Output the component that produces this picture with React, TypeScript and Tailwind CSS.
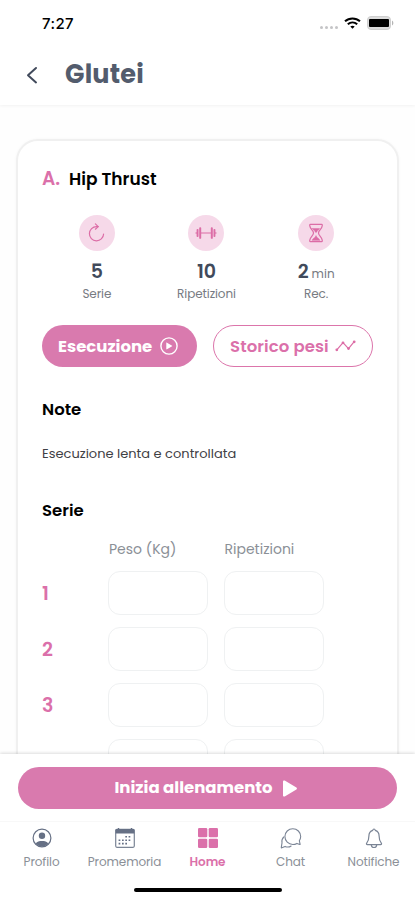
import type { ReactNode } from 'react';

const SETS = [1, 2, 3, 4];

function StatusBar() {
  return (
    <div className="flex h-[46px] items-center justify-between pl-[42px] pr-[21px]">
      <span className="font-['Inter',sans-serif] text-[15px] font-medium leading-none tracking-[0.4px] text-black">7:27</span>
      <div className="flex items-center">
        <div className="mr-[6px] mt-[8px] flex gap-[2px]">
          <span className="h-[3px] w-[3px] rounded-full bg-[#c4c4c6]" />
          <span className="h-[3px] w-[3px] rounded-full bg-[#c4c4c6]" />
          <span className="h-[3px] w-[3px] rounded-full bg-[#c4c4c6]" />
          <span className="h-[3px] w-[3px] rounded-full bg-[#c4c4c6]" />
        </div>
        <svg width="17" height="12" viewBox="0 0 17 12" className="mr-[6px]" fill="none" stroke="#000" strokeWidth="2">
          <path d="M1 4.3C5.2.4 11.8.4 16 4.3" />
          <path d="M3.8 7.2c2.7-2.4 6.7-2.4 9.4 0" />
          <path d="M8.5 11.8 6.3 9.6c1.2-1.1 3.2-1.1 4.4 0z" fill="#000" stroke="none" />
        </svg>
        <svg width="27" height="14" viewBox="0 0 27 14">
          <rect x=".5" y=".5" width="23" height="13" rx="3.5" fill="#dcdcdc" stroke="#cfcfcf" />
          <rect x="2" y="3" width="20" height="8" rx="1" fill="#000" />
          <path d="M25 4.5v5c1.8-.8 1.8-4.2 0-5z" fill="#b5b5b5" />
        </svg>
      </div>
    </div>
  );
}

function ReloadIcon() {
  return (
    <svg width="20" height="20" viewBox="0 0 20 20" fill="none" stroke="#dc6da6" strokeWidth="1.2" strokeLinecap="round" strokeLinejoin="round">
      <path d="M16.6 11a7.1 7.1 0 1 1-7-7.4h1.6" />
      <path d="m8.4.9 2.8 2.7-2.8 2.6" />
    </svg>
  );
}

function DumbbellIcon() {
  return (
    <svg width="22" height="14" viewBox="0 0 22 14" fill="#dc6da6">
      <rect x="6" y="6.5" width="10" height="1" />
      <rect x="4.2" y="1.2" width="2" height="11.6" rx=".9" />
      <rect x="1.6" y="3" width="1.9" height="8" rx=".8" />
      <rect x="15.8" y="1.2" width="2" height="11.6" rx=".9" />
      <rect x="18.5" y="3" width="1.9" height="8" rx=".8" />
      <rect x=".6" y="6.3" width="1.2" height="1.4" />
      <rect x="20.2" y="6.3" width="1.2" height="1.4" />
    </svg>
  );
}

function HourglassIcon() {
  return (
    <svg width="16" height="20" viewBox="0 0 16 20" fill="none" stroke="#dc6da6" strokeWidth="1.2" strokeLinejoin="round" strokeLinecap="round">
      <path d="M2.4 1.3h11.2c.9 0 .7 1 .6 1.6-.4 3.5-3.7 4.6-3.7 7.1s3.3 3.6 3.7 7.1c.1.6.3 1.6-.6 1.6H2.4c-.9 0-.7-1-.6-1.6C2.2 13.6 5.5 12.5 5.5 10S2.2 6.4 1.8 2.9c-.1-.6-.3-1.6.6-1.6z" />
      <path d="M4.3 5.6h7.4c-1 1.3-2.6 2-3 3.6H7.3c-.4-1.6-2-2.3-3-3.6zM4.2 17.2c.4-1.9 3.3-2 3.8-4.6.5 2.6 3.4 2.7 3.8 4.6z" fill="#dc6da6" strokeWidth=".5" />
    </svg>
  );
}

function PlayCircleIcon() {
  return (
    <svg width="18" height="18" viewBox="0 0 18 18" fill="none" stroke="#fff" strokeWidth="1.4">
      <circle cx="9" cy="9" r="8.1" />
      <path d="M6.3 6v6c0 .4.4.5.7.3l5.1-3c.3-.2.3-.4 0-.6L7 5.700c-.3-.2-.7 0-.7.3z" fill="#fff" stroke="none" />
    </svg>
  );
}

function ChartIcon() {
  return (
    <svg width="21" height="12" viewBox="0 0 21 12" fill="#dc6da6" stroke="#dc6da6" strokeWidth="1.2">
      <path d="m1.8 9.8 6.2-7.2 5.5 6 5.7-7" fill="none" />
      <circle cx="1.8" cy="9.8" r=".8" />
      <circle cx="8" cy="2.8" r=".8" />
      <circle cx="13.5" cy="8.6" r=".8" />
      <circle cx="19.2" cy="1.8" r=".8" />
    </svg>
  );
}

function ProfileIcon() {
  return (
    <svg width="20" height="20" viewBox="0 0 20 20" fill="none">
      <circle cx="10" cy="10" r="8.9" stroke="#667085" strokeWidth="1.2" />
      <circle cx="10" cy="7.8" r="3.2" fill="#667085" />
      <path d="M3.7 15.4C5 13.5 7.3 12.9 10 12.9s5 .6 6.3 2.5c-3.4 4.1-9.2 4.1-12.6 0z" fill="#667085" />
    </svg>
  );
}

function CalendarIcon() {
  return (
    <svg width="20" height="20" viewBox="0 0 20 20" fill="none">
      <rect x=".7" y="1.4" width="18.6" height="17.9" rx="1.2" stroke="#7a8495" strokeWidth="1.2" />
      <path d="M.6 2.2C.6 1.5 1.2 1 2 1h16c.8 0 1.4.5 1.4 1.2v3.2H.6z" fill="#667085" />
      <path d="M3.5 0v2.5M16.5 0v2.5" stroke="#667085" strokeWidth="1.4" />
      <path d="M10.3 8.8H12M13.6 8.8h1.7M3.6 12.2h1.7M7 12.2h1.7M10.3 12.2H12M13.6 12.2h1.7M3.6 15.6h1.7M7 15.6h1.7M10.3 15.6H12" stroke="#667085" strokeWidth="1.6" />
    </svg>
  );
}

function HomeIcon() {
  return (
    <svg width="20" height="20" viewBox="0 0 20 20" fill="#db70aa">
      <rect x="0" y="0" width="9.3" height="9.3" rx="1.3" />
      <rect x="10.7" y="0" width="9.3" height="9.3" rx="1.3" />
      <rect x="0" y="10.7" width="9.3" height="9.3" rx="1.3" />
      <rect x="10.7" y="10.7" width="9.3" height="9.3" rx="1.3" />
    </svg>
  );
}

function ChatIcon() {
  return (
    <svg width="22" height="21" viewBox="0 0 22 21" fill="none" stroke="#7a8495" strokeWidth="1.1" strokeLinejoin="round" strokeLinecap="round">
      <path d="M19.3 12.7c.9-1.3 1.4-2.6 1.4-4.1a7.9 7.9 0 1 0-7.9 7.9c1.5 0 2.9-.4 4.1-1.1l2.9 1.1c.3.1.4-.1.3-.4z" />
      <path d="M3.7 9A6.500 6.500 0 0 0 2 14.8l-.7 4.5c-.1.4.1.6.5.5l3.3-1.4c2.2 1 4.3.8 6-.4" />
    </svg>
  );
}

function BellIcon() {
  return (
    <svg width="18" height="21" viewBox="0 0 18 21" fill="none" stroke="#7a8495" strokeWidth="1.2" strokeLinejoin="round" strokeLinecap="round">
      <path d="M9 1c-.7 0-1.1.5-1.2 1.3C5.1 3 3.9 5.3 3.9 8c0 4.2-.9 5.7-2.2 7.2-.6.7-.1 1.4.7 1.4h13.2c.8 0 1.3-.7.7-1.4-1.3-1.5-2.2-3-2.2-7.2 0-2.7-1.2-5-3.9-5.7C10.1 1.5 9.7 1 9 1z" />
      <path d="M6.3 16.8c.5 3.6 4.9 3.6 5.4 0" />
    </svg>
  );
}

function Stat({ icon, value, label }: { icon: ReactNode; value: ReactNode; label: string }) {
  return (
    <div className="flex flex-col items-center">
      <div className="flex h-9 w-9 items-center justify-center rounded-full bg-[#f6d9e9]">{icon}</div>
      <div className="mt-2 h-6 whitespace-nowrap text-[19px] font-semibold leading-[25px] text-[#414a5b]">{value}</div>
      <div className="mt-px text-[12px] leading-5 tracking-[-0.1px] text-[#777b82]">{label}</div>
    </div>
  );
}

const NAV_ITEMS = [
  { label: 'Profilo', icon: <ProfileIcon /> },
  { label: 'Promemoria', icon: <CalendarIcon /> },
  { label: 'Home', icon: <HomeIcon />, active: true },
  { label: 'Chat', icon: <ChatIcon /> },
  { label: 'Notifiche', icon: <BellIcon /> },
];

export default function App() {
  return (
    <div className="flex h-[900px] w-full flex-col overflow-hidden bg-[#fefefe] font-['Poppins','Inter',sans-serif]">
      <header className="h-[105px] shrink-0 bg-white shadow-[0_1px_3px_rgba(0,0,0,0.05)]">
        <StatusBar />
        <div className="flex h-[57px] items-center pl-[26px]">
          <svg width="12" height="18" viewBox="0 0 12 18" fill="none" stroke="#414a5b" strokeWidth="2" strokeLinejoin="round" strokeLinecap="round">
            <path d="m10 2-8 7.200 8 7.200" />
          </svg>
          <h1 className="ml-[27px] text-[25.5px] font-bold leading-none tracking-[0.2px] text-[#535c6d]">Glutei</h1>
        </div>
      </header>

      <main className="min-h-0 flex-1 overflow-hidden px-4 pt-[34px]">
        <section className="h-[760px] rounded-[22px] border-2 border-[#f0f0f0] bg-white px-6 pt-[26px] shadow-[0_0_3px_rgba(0,0,0,0.04)]">
          <div className="flex h-6 items-center">
            <span className="w-[27px] text-[18.5px] font-semibold leading-[22px] text-[#db70aa]">A.</span>
            <h2 className="text-[17px] font-semibold leading-6 text-black">Hip Thrust</h2>
          </div>

          <div className="mt-6 grid w-[329px] grid-cols-3">
            <Stat icon={<ReloadIcon />} value="5" label="Serie" />
            <Stat icon={<DumbbellIcon />} value="10" label="Ripetizioni" />
            <Stat
              icon={<HourglassIcon />}
              value={<>2<span className="ml-[3px] text-[12px] font-normal text-[#777b82]">min</span></>}
              label="Rec."
            />
          </div>

          <div className="mt-[21px] flex gap-4">
            <button className="flex h-[42px] w-[155px] items-center rounded-full bg-[#d97aae] pl-4">
              <span className="w-[102px] whitespace-nowrap pt-[2px] text-left text-[16.5px] font-bold text-white">Esecuzione</span>
              <PlayCircleIcon />
            </button>
            <button className="flex h-[42px] w-[160px] items-center rounded-full border border-[#dc75ab] pl-4">
              <span className="w-[105px] whitespace-nowrap pt-[2px] text-left text-[16.5px] font-semibold tracking-[0.1px] text-[#db70aa]">Storico pesi</span>
              <ChartIcon />
            </button>
          </div>

          <h3 className="mt-[31px] text-[16.5px] font-semibold leading-6 text-black">Note</h3>
          <p className="mt-[22px] text-[13px] leading-5 text-[#3f4145]">Esecuzione lenta e controllata</p>
          <h3 className="mt-[35px] text-[16.5px] font-semibold leading-6 text-black">Serie</h3>

          <div className="mt-[16px] grid grid-cols-[67px_100px_100px] text-[14px] leading-5 text-[#8b9097]">
            <span />
            <span>Peso (Kg)</span>
            <span className="ml-[15.5px]">Ripetizioni</span>
          </div>
          <div className="mt-[12px] flex flex-col gap-3">
            {SETS.map((set) => (
              <div key={set} className="flex h-11 items-center">
                <span className="w-[66px] pt-[2px] text-[19px] font-semibold leading-5 text-[#db70aa]">{set}</span>
                <input className="h-11 w-[100px] rounded-[12px] border border-[#eff1f2] bg-white" />
                <input className="ml-4 h-11 w-[100px] rounded-[12px] border border-[#eff1f2] bg-white" />
              </div>
            ))}
          </div>
        </section>
      </main>

      <footer className="relative h-[146px] shrink-0 bg-white shadow-[0_-1px_3px_rgba(0,0,0,0.14)]">
        <div className="h-[67px] px-[18px] pt-[13px]">
          <button className="flex h-[42px] w-full items-center justify-center gap-[10px] rounded-full bg-[#d97aae] pr-1 text-[16.5px] font-bold text-white">
            Inizia allenamento
            <svg width="14" height="17" viewBox="0 0 14 17" fill="#fff">
              <path d="M0 1.600v13.800c0 1 .9 1.500 1.700 1L13.400 9.400c.7-.4.7-1.400 0-1.800L1.700.6C.9.100 0 .6 0 1.600z" />
            </svg>
          </button>
        </div>
        <nav className="grid grid-cols-5 border-t border-[#f8f8f8] pt-[5px]">
          {NAV_ITEMS.map(({ label, icon, active }) => (
            <a key={label} className="flex flex-col items-center">
              <span className="flex h-[22px] items-center">{icon}</span>
              <span className={`mt-[3px] text-[12px] leading-5 tracking-[-0.1px] ${active ? 'font-semibold text-[#db70aa]' : 'text-[#8b9097]'}`}>
                {label}
              </span>
            </a>
          ))}
        </nav>
        <div className="mx-auto mt-[16px] h-[4px] w-[148px] rounded-full bg-black" />
      </footer>
    </div>
  );
}
